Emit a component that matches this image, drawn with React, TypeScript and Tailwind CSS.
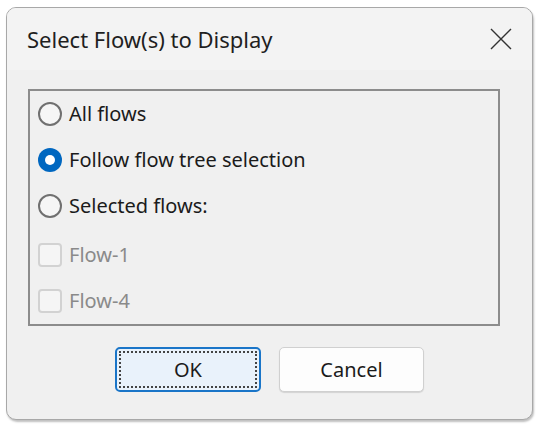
import { useState } from "react";

type Flow = { id: string; label: string };

const flows: Flow[] = [
    { id: "f1", label: "Flow-1" },
    { id: "f4", label: "Flow-4" },
];

const modes = [
    { id: "all", label: "All flows" },
    { id: "tree", label: "Follow flow tree selection" },
    { id: "selected", label: "Selected flows:" },
];

const Radio = ({ checked }: { checked: boolean }) => {
    if (checked) {
        return (
            <span className="w-[24px] h-[24px] rounded-full bg-[#0067c0] flex items-center justify-center shrink-0">
                <span className="w-[10px] h-[10px] rounded-full bg-white"></span>
            </span>
        );
    }
    return <span className="w-[24px] h-[24px] rounded-full border-2 border-[#707070] bg-[#f6f6f6] shrink-0"></span>;
};

const App = () => {
    const [mode, setMode] = useState("tree");

    return (
        <div className="w-[536px] h-[424px] bg-white pt-[7px] pl-[6px] font-['Noto_Sans',sans-serif] text-[#1b1b1b]">
            <div className="w-[527px] h-[413px] rounded-[10px] border border-[#a8a8a8] bg-[#f0f0f0] shadow-[1px_2px_2px_rgba(0,0,0,0.25)] overflow-hidden flex flex-col">
                <div className="h-[62px] bg-[#f3f3f3] flex items-center justify-between pl-[20px] pr-[19px]">
                    <span className="text-[22px] text-[#1f1f1f]">Select Flow(s) to Display</span>
                    <svg width="22" height="22" viewBox="0 0 22 22" className="text-[#333] mr-[1px]">
                        <path d="M1 1 L21 21 M21 1 L1 21" stroke="currentColor" strokeWidth="1.4" />
                    </svg>
                </div>
                <div className="pt-[19px] pl-[21px]">
                    <div className="w-[472px] h-[237px] border-2 border-[#8c8c8c] flex flex-col">
                        <div className="flex flex-col">
                            {modes.map((m) => (
                                <div
                                    key={m.id}
                                    onClick={() => setMode(m.id)}
                                    className="h-[46px] flex items-center gap-[7px] pl-[8px] text-[20px] cursor-default"
                                >
                                    <Radio checked={mode === m.id} />
                                    <span>{m.label}</span>
                                </div>
                            ))}
                        </div>
                        <div className="h-[2px] bg-[#a0a0a0] mt-[-1px]"></div>
                        <div className="flex flex-col pt-[4px]">
                            {flows.map((f) => (
                                <div key={f.id} className="h-[46px] flex items-center gap-[7px] pl-[8px] text-[20px] text-[#8a8a8a]">
                                    <span className="w-[24px] h-[24px] rounded-[4px] border-2 border-[#d2d2d2] bg-[#f5f5f5] shrink-0"></span>
                                    <span>{f.label}</span>
                                </div>
                            ))}
                        </div>
                    </div>
                </div>
                <div className="flex justify-center gap-[18px] mt-[21px]">
                    <button className="w-[146px] h-[45px] rounded-[5px] border-2 border-[#1a75c8] bg-[#e9f2fb] p-[2px] text-[20px]">
                        <span className="w-full h-full flex items-center justify-center border-2 border-dotted border-[#444]">OK</span>
                    </button>
                    <button className="w-[145px] h-[45px] rounded-[5px] border border-[#d0d0d0] bg-[#fdfdfd] text-[20px] shadow-[0_1px_1px_rgba(0,0,0,0.12)]">
                        Cancel
                    </button>
                </div>
            </div>
        </div>
    );
};

export default App;
